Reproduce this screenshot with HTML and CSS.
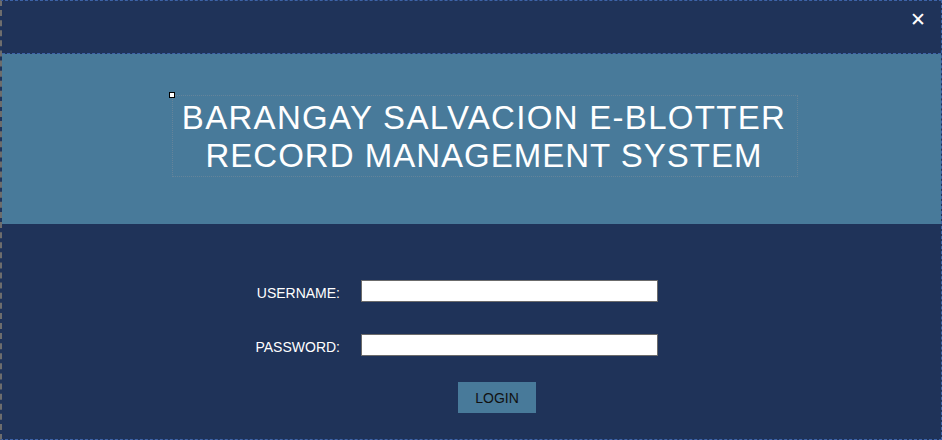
FILE: index.html
```html
<!DOCTYPE html>
<html>
<head>
<meta charset="utf-8">
<link rel="stylesheet" href="styles.css">
</head>
<body>
<div class="form">
  <div class="topbar">
    <span class="close">&#x2715;</span>
  </div>
  <div class="banner">
    <div class="title-box">
      <span class="handle"></span>
      <div class="title">BARANGAY SALVACION E-BLOTTER<br><span class="line2">RECORD MANAGEMENT SYSTEM</span></div>
    </div>
  </div>
  <div class="login">
    <div class="row">
      <label class="lbl">USERNAME:</label>
      <input class="field" type="text">
    </div>
    <div class="row">
      <label class="lbl">PASSWORD:</label>
      <input class="field" type="password">
    </div>
    <button class="btn">LOGIN</button>
  </div>
</div>
</body>
</html>
```
FILE: styles.css
```css
* { box-sizing: border-box; }
html, body { margin: 0; padding: 0; }
body { width: 942px; height: 440px; overflow: hidden; background: #1f3359; font-family: "Liberation Sans", Arial, sans-serif; }
.form {
  width: 942px; height: 440px;
  background: #1f3359;
  border-top: 1px dashed #3d63a8;
  border-left: 2px dashed #6d6d6d;
  border-right: 1px dashed #3d63a8;
  border-bottom: 1px dashed #3d63a8;
  display: flex; flex-direction: column;
}
.topbar {
  height: 53px;
  border-bottom: 1px dashed #3d63a8;
  display: flex; justify-content: flex-end; align-items: flex-start;
  padding: 9px 15px 0 0;
}
.close { color: #fff; font-size: 19px; font-weight: bold; line-height: 18px; font-family: "DejaVu Sans", sans-serif; }
.banner {
  height: 170px;
  background: #487a9a;
  padding: 41px 0 0 170px;
}
.title-box {
  position: relative;
  width: 626px; height: 82px;
  border: 1px dotted #65849a;
}
.handle {
  position: absolute; left: -4px; top: -4px;
  width: 6px; height: 6px; background: #fff; border: 1px solid #000;
}
.title {
  color: #fff; font-size: 33px; line-height: 38px; letter-spacing: 1.3px; text-align: center;
  padding-top: 3px; padding-right: 2px;
  white-space: nowrap;
}
.line2 { letter-spacing: 1px; }
.login {
  flex: 1;
  display: flex; flex-direction: column; align-items: flex-start;
  padding: 56px 0 0 0;
}
.row { display: flex; align-items: center; height: 22px; margin-bottom: 32px; }
.lbl { width: 338px; text-align: right; color: #fff; font-size: 14px; padding-top: 4px; }
.field {
  margin-left: 21px; width: 297px; height: 22px;
  border: 1px solid #6b6b6b; background: #fff; padding: 0;
}
.btn {
  margin-left: 456px; margin-top: -6px;
  width: 78px; height: 31px;
  background: #487a9a; border: none; color: #111;
  font-family: "Liberation Sans", Arial, sans-serif; font-size: 14px;
}
```
